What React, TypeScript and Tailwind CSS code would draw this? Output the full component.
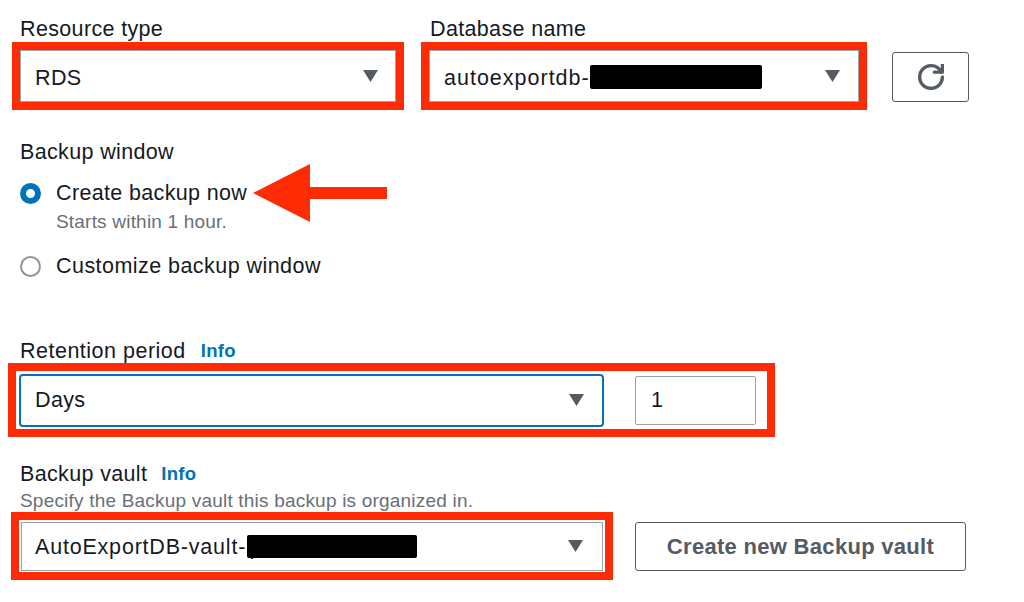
import React from "react";

const Caret = () => (
  <svg width="15" height="12" viewBox="0 0 15 12" className="shrink-0">
    <polygon points="0,0 15,0 7.5,12" fill="#545b64" />
  </svg>
);

const RefreshIcon = () => (
  <svg width="26" height="26" viewBox="0 0 16 16" fill="none" stroke="#545b64" strokeWidth="2" strokeLinecap="round" strokeLinejoin="round">
    <path d="M10 5h5V0" />
    <path d="M15 8a6.957 6.957 0 0 1-7 7 6.957 6.957 0 0 1-7-7 6.957 6.957 0 0 1 7-7 6.87 6.87 0 0 1 6.3 4" />
  </svg>
);

export default function App() {
  return (
    <div
      className="relative w-[1024px] h-[602px] overflow-hidden bg-white pt-[16px] text-[#16191f] tracking-[0.35px]"
      style={{ fontFamily: '"Liberation Sans", Arial, sans-serif' }}
    >
      {/* Row 1 */}
      <div className="flex items-end pl-[12px]">
        <div className="w-[392px]">
          <div className="pl-[8px] text-[21.5px] leading-[26px]">Resource type</div>
          <div className="h-[68px] w-[392px] border-[8px] border-[#fe2b04]">
            <div className="flex h-full w-full items-center justify-between border-[1.5px] border-[#9aa3ab] bg-white pl-[14px] pr-[17px] pt-[4px] text-[21.5px]">
              <span>RDS</span>
              <span className="-mt-[4px]">
                <Caret />
              </span>
            </div>
          </div>
        </div>
        <div className="ml-[17px] w-[446px]">
          <div className="pl-[9px] text-[21.5px] leading-[26px]">Database name</div>
          <div className="h-[68px] w-[446px] border-[8px] border-[#fe2b04]">
            <div className="flex h-full w-full items-center justify-between border-[1.5px] border-[#9aa3ab] bg-white pl-[14px] pr-[18px] text-[21.5px]">
              <span className="flex items-center">
                <span className="inline-block w-[146px] pt-[4px] tracking-[1px]">autoexportdb-</span>
                <span className="mt-[1px] inline-block h-[24px] w-[172px] rounded-[2px] bg-black" />
              </span>
              <Caret />
            </div>
          </div>
        </div>
        <div className="mb-[8px] ml-[25px] flex h-[50px] w-[77px] items-center justify-center rounded-[3px] border-[1.5px] border-[#545b64] bg-white">
          <RefreshIcon />
        </div>
      </div>

      {/* Backup window */}
      <div className="mt-[28px] pl-[20px]">
        <div className="text-[21.5px] leading-[28px]">Backup window</div>
        <div className="relative mt-[13px] flex h-[28px] items-center">
          <span className="box-border inline-block h-[21px] w-[21px] rounded-full border-[6.5px] border-[#0073bb] bg-white" />
          <span className="ml-[15px] text-[21.5px]">Create backup now</span>
          <svg
            className="absolute left-[233px] top-[-15px]"
            width="134"
            height="58"
            viewBox="0 0 134 58"
          >
            <polygon points="0,29 57,0 57,23 134,23 134,35 57,35 57,58" fill="#fe2b04" />
          </svg>
        </div>
        <div className="mt-[3px] pl-[36px] text-[19px] leading-[24px] tracking-[0.2px] text-[#687078]">Starts within 1 hour.</div>
        <div className="mt-[18px] flex h-[28px] items-center">
          <span className="box-border inline-block h-[21px] w-[21px] rounded-full border-[2px] border-[#8d969e] bg-white" />
          <span className="ml-[15px] text-[21.5px] tracking-[0.45px]">Customize backup window</span>
        </div>
      </div>

      {/* Retention period */}
      <div className="mt-[59px] flex h-[24px] items-center pl-[20px] leading-[24px]">
        <span className="text-[21.5px] tracking-[0.5px]">Retention period</span>
        <span className="ml-[15px] text-[18.5px] font-bold tracking-[0.3px] text-[#0073bb]">Info</span>
      </div>
      <div className="ml-[8px] flex h-[74px] w-[767px] items-center border-[8px] border-[#fe2b04] pl-[3px]">
        <div className="flex h-[53px] w-[585px] items-center justify-between rounded-[4px] border-[2px] border-[#0073bb] bg-white pl-[14px] pr-[18px] text-[21.5px]">
          <span>Days</span>
          <Caret />
        </div>
        <div className="ml-[31px] flex h-[49px] w-[121px] items-center rounded-[2px] border-[1.5px] border-[#9aa3ab] bg-white pl-[15px] text-[21.5px]">
          1
        </div>
      </div>

      {/* Backup vault */}
      <div className="mt-[25px] flex h-[24px] items-center pl-[20px] leading-[24px]">
        <span className="text-[21.5px]">Backup vault</span>
        <span className="ml-[14px] text-[18.5px] font-bold tracking-[0.3px] text-[#0073bb]">Info</span>
      </div>
      <div className="mt-[4px] h-[22px] pl-[20px] text-[19px] leading-[22px] tracking-[0.2px] text-[#687078]">
        Specify the Backup vault this backup is organized in.
      </div>
      <div className="flex items-center">
        <div className="ml-[11px] flex h-[68px] w-[602px] items-center border-[8px] border-[#fe2b04] pl-[2px]">
          <div className="flex h-[49px] w-[582px] items-center justify-between border-[1.5px] border-[#9aa3ab] bg-white pl-[13px] pr-[19px] text-[21.5px]">
            <span className="flex items-center">
              <span className="inline-block w-[212px] whitespace-nowrap pt-[2px] tracking-[0.8px]">AutoExportDB-vault-(</span>
              <span className="inline-block h-[23px] w-[170px] rounded-[2px] bg-black" />
            </span>
            <Caret />
          </div>
        </div>
        <div className="ml-[22px] flex h-[49px] w-[331px] items-center justify-center rounded-[3px] border-[1.5px] border-[#545b64] bg-white pt-[1px] text-[22px] font-bold tracking-[0.3px] text-[#545b64]">
          Create new Backup vault
        </div>
      </div>
    </div>
  );
}
